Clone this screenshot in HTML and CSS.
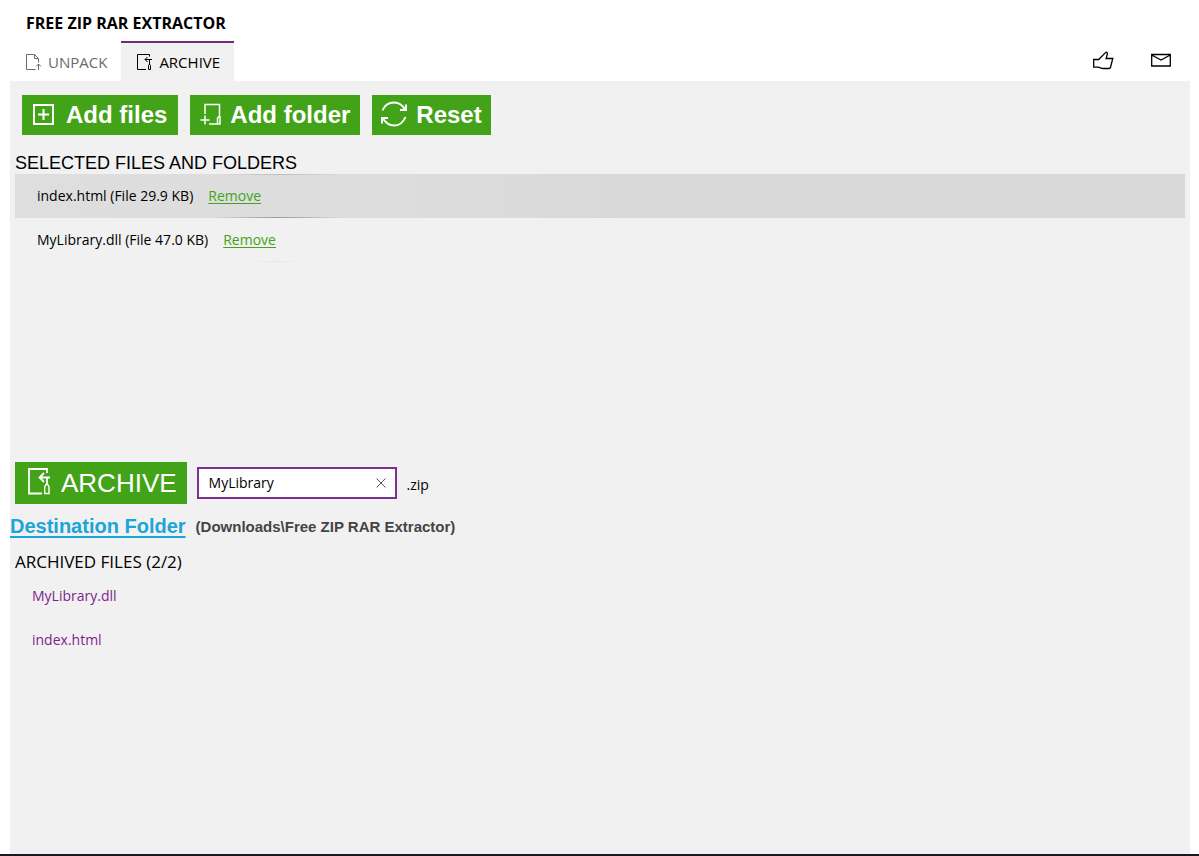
FILE: index.html
```html
<!DOCTYPE html>
<html lang="en">

<head>
    <title>Free ZIP RAR Extractor</title>
    <meta charset="utf-8">
    <meta name="viewport" content="width=device-width, initial-scale=1">
    <link rel="stylesheet" href="styles.css">
</head>

<body>
    <header class="header">
        <h1 class="app-title">FREE ZIP RAR EXTRACTOR</h1>
        <div class="header-row">
            <nav class="tabs">
                <button type="button" class="tab">
                    <svg width="16" height="17" viewBox="0 0 16 17" fill="none" stroke="currentColor"><path d="M9.5 15.5H.5V.5h8l4 4v4M8.5.5v4h4M12.500 16V10M10 12.500l2.500-2.500 2.500 2.500"/></svg>
                    UNPACK
                </button>
                <button type="button" class="tab active">
                    <svg width="16" height="17" viewBox="0 0 16 17" fill="none" stroke="currentColor"><path d="M9 15.5H.5V.5h12v2M8 5.5h7M10.500 3L8 5.500 10.500 8M12.500 5.500v5M11.500 15.500v-4l.5-1h1l.5 1v4z"/></svg>
                    ARCHIVE
                </button>
            </nav>
            <div class="header-actions">
                <button type="button" class="icon-button" aria-label="Rate this app">
                    <svg width="21" height="19" viewBox="0 0 21 19" fill="none" stroke="currentColor" stroke-width="1.3"><path d="M.7 8.500h5L12.500 1.600c.7-.8 2-.3 1.900.8-.1 1.500-.8 3.400-1.300 5.100h6.700L17.600 16c-.2 1-.8 1.500-1.700 1.500H10c-2 0-3-1.300-5-1.300H.7z"/></svg>
                </button>
                <button type="button" class="icon-button" aria-label="Send feedback">
                    <svg width="20" height="14" viewBox="0 0 20 14" fill="none" stroke="currentColor" stroke-width="1.3"><path d="M.7 1.500h18.600v11.500H.7zM.7 2l9.300 5 9.300-5"/></svg>
                </button>
            </div>
        </div>
    </header>

    <main class="content">
        <div class="toolbar">
            <button type="button" class="button">
                <svg width="22" height="22" viewBox="0 0 22 22" fill="none" stroke="currentColor" stroke-width="2"><path d="M2 2h19v19H2zM6 11.500h11M11.500 6v11"/></svg>
                <span>Add files</span>
            </button>
            <button type="button" class="button button-folder">
                <svg width="22" height="22" viewBox="0 0 22 22" fill="none" stroke="currentColor" stroke-width="1.5"><path d="M5 11V1.500h14.500v12M5 12.500v9M.5 17h9M9 21h9.500M17.500 21v-6l1-1h1.500v7z"/></svg>
                <span>Add folder</span>
            </button>
            <button type="button" class="button button-reset">
                <svg width="26" height="26" viewBox="0 0 26 26" fill="none" stroke="currentColor" stroke-width="2"><path d="M1.500 9.500C3.500 4.500 8 1.500 13 1.500c5 0 8.500 2.500 11 7M25 3.500v5.500h-6M24.500 16c-2 5-6.500 8.500-11.500 8.500S4.500 21.500 2 17.500M1 22.500V17h6"/></svg>
                <span>Reset</span>
            </button>
        </div>

        <section class="selected">
            <h2 class="selected-title">SELECTED FILES AND FOLDERS</h2>
            <ul class="file-list">
                <li class="file current">index.html (File 29.9 KB) <a href="#" class="remove">Remove</a></li>
                <li class="file">MyLibrary.dll (File 47.0 KB) <a href="#" class="remove">Remove</a></li>
            </ul>
        </section>

        <form class="archive-form">
            <button type="button" class="button button-archive">
                <svg width="24" height="27" viewBox="0 0 24 27" fill="none" stroke="currentColor" stroke-width="1.8"><path d="M15 25.500H2V1h18v4M23 9.500H12.500M17 5l-4.500 4.500L17 14M20 9.500v7"/><path stroke-width="1.4" d="M17.700 25.500v-6.500l1.300-2.500h1.700l1.300 2.500v6.500z"/></svg>
                <span>ARCHIVE</span>
            </button>
            <div class="name-box">
                <input type="text" class="name-input" id="archive-name" value="MyLibrary" aria-label="Archive name">
                <button type="button" class="clear" aria-label="Clear name">
                    <svg width="10" height="10" viewBox="0 0 10 10" fill="none" stroke="currentColor"><path d="M.5.5l9 9M9.500.5l-9 9"/></svg>
                </button>
            </div>
            <label for="archive-name" class="extension">.zip</label>
        </form>

        <div class="destination">
            <a href="#" class="destination-link">Destination Folder</a>
            <span class="destination-path">(Downloads\Free ZIP RAR Extractor)</span>
        </div>

        <section class="archived">
            <h2 class="archived-title">ARCHIVED FILES (2/2)</h2>
            <ul class="archived-list">
                <li><a href="#">MyLibrary.dll</a></li>
                <li><a href="#">index.html</a></li>
            </ul>
        </section>
    </main>
</body>

</html>
```
FILE: styles.css
```css
* {
    box-sizing: border-box;
}

body {
    margin: 0;
    min-height: 100vh;
    display: flex;
    flex-direction: column;
    background: #fff;
    color: #000;
    border-bottom: 2px solid #1c191e;
    font-family: "Open Sans", "Noto Sans", sans-serif;
    font-size: 14px;
    line-height: 20px;
}

h1, h2, ul {
    margin: 0;
    padding: 0;
    list-style: none;
}

button {
    border: 0;
    padding: 0;
    background: none;
    color: inherit;
    font: inherit;
    cursor: pointer;
}

svg {
    display: block;
    flex: none;
}

/* header */
.header {
    padding: 13px 9px 0 10px;
}

.app-title {
    padding-left: 16px;
    font-size: 16px;
    font-weight: 700;
    line-height: 20px;
}

.header-row {
    display: flex;
    justify-content: space-between;
    margin-top: 8px;
}

.tabs {
    display: flex;
}

.tab {
    display: flex;
    align-items: center;
    gap: 6px;
    height: 40px;
    padding: 0 14px 0 16px;
    border-top: 2px solid transparent;
    color: #6b6b6b;
    font-size: 15px;
}

.tab.active {
    background: #f1f1f1;
    border-top-color: #742a7c;
    color: #000;
}

.header-actions {
    display: flex;
    align-items: center;
    gap: 37px;
    padding: 0 19px 2px 0;
}

/* content */
.content {
    flex: 1;
    margin: 0 9px 0 10px;
    padding: 14px 0;
    background: #f1f1f1;
}

.toolbar {
    display: flex;
    gap: 12px;
    padding: 0 12px;
}

.button {
    display: flex;
    align-items: center;
    gap: 12px;
    height: 40px;
    padding: 0 11px 0 10px;
    background: #43a318;
    color: #fff;
    font-family: "Liberation Sans", Arial, sans-serif;
    font-size: 24px;
    font-weight: 700;
    white-space: nowrap;
}

.button svg {
    margin-bottom: 3px;
}

.button-folder {
    gap: 8px;
    padding: 0 10px;
}

.button-reset {
    gap: 9px;
    padding: 0 9px;
}

.selected {
    min-height: 327px;
    padding: 18px 5px 0;
}

.selected-title {
    font-family: "Liberation Sans", Arial, sans-serif;
    font-size: 18px;
    font-weight: 400;
    line-height: 20px;
}

.file {
    display: flex;
    align-items: center;
    gap: 15px;
    height: 44px;
    padding: 0 22px;
    background: linear-gradient(90deg, transparent, #e6e6e6, transparent) 230px 100% / 60px 1px no-repeat;
}

/* pointer glow on the edges of the row */
.file.current {
    margin-top: 1px;
    background:
        linear-gradient(90deg, transparent, #bcbcbc, transparent) 200px 0 / 130px 1px no-repeat,
        linear-gradient(90deg, transparent, #999, transparent) 195px 100% / 135px 1px no-repeat,
        linear-gradient(90deg, #dedede 0, #dddddd 360px, #d9d9d9 600px);
}

.remove {
    color: #43a318;
    text-underline-offset: 2px;
}

/* archive name */
.archive-form {
    display: flex;
    align-items: center;
    gap: 10px;
    padding-left: 5px;
}

.button-archive {
    gap: 10px;
    height: 42px;
    padding: 0 10px 0 12px;
    font-size: 26px;
    font-weight: 400;
}

.name-box {
    display: flex;
    align-items: center;
    width: 200px;
    height: 32px;
    padding: 0 9px 0 10px;
    background: #fff;
    border: 2px solid #7e3090;
}

.name-input {
    flex: 1;
    min-width: 0;
    padding: 0;
    border: 0;
    outline: none;
    background: none;
    font: inherit;
}

.clear {
    color: #555;
}

.extension {
    padding-top: 3px;
}

/* destination */
.destination {
    display: flex;
    align-items: center;
    gap: 10px;
    margin-top: 10px;
}

.destination-link {
    color: #1ba5d8;
    font-family: "Liberation Sans", Arial, sans-serif;
    font-size: 20px;
    font-weight: 700;
    line-height: 24px;
    text-underline-offset: 3px;
}

.destination-path {
    padding-top: 2px;
    color: #444;
    font-family: "Liberation Sans", Arial, sans-serif;
    font-size: 15px;
    font-weight: 700;
}

/* archived files */
.archived {
    padding: 12px 5px 0;
}

.archived-title {
    font-size: 17px;
    font-weight: 400;
    line-height: 24px;
}

.archived-list li {
    display: flex;
    align-items: center;
    height: 44px;
    padding-left: 17px;
}

.archived-list a {
    color: #7d1f8d;
    text-decoration: none;
}
```
